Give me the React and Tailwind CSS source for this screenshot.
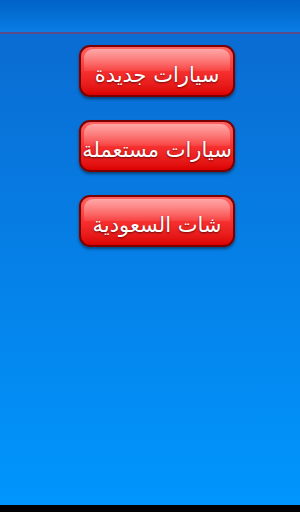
const items = ['سيارات جديدة', 'سيارات مستعملة', 'شات السعودية'];

function RedButton({ label }) {
  return (
    <button className="relative w-[156px] h-[52px] rounded-[11px] border-2 border-[#7a0000] bg-gradient-to-b from-[#ff6262] via-[#f73030] to-[#dc0000] shadow-[0_2px_3px_rgba(0,0,0,0.45)] overflow-hidden">
      <span className="absolute left-[3px] right-[3px] top-[2px] h-[22px] rounded-t-[9px] bg-gradient-to-b from-[rgba(255,255,255,0.45)] to-[rgba(255,255,255,0.08)]" />
      <span
        dir="rtl"
        className="relative block text-white text-[21px] leading-[48px] pt-[4px] whitespace-nowrap [text-shadow:0_1px_2px_rgba(80,0,0,0.8)]"
        style={{ fontFamily: '"DejaVu Sans", "Noto Sans", sans-serif' }}
      >
        {label}
      </span>
    </button>
  );
}

export default function App() {
  return (
    <div className="w-[300px] h-[512px] flex flex-col overflow-hidden">
      <div className="h-[32px] bg-gradient-to-b from-[#0062c6] to-[#0a7de4]" />
      <div className="h-[2px] bg-[#5a4c8c]" />
      <div className="flex-1 bg-gradient-to-b from-[#0a6cd2] to-[#0096fd] flex flex-col items-center pl-[14px] pt-[11px] gap-[23px]">
        {items.map(t => (
          <RedButton key={t} label={t} />
        ))}
      </div>
      <div className="h-[7px] bg-black" />
    </div>
  );
}
